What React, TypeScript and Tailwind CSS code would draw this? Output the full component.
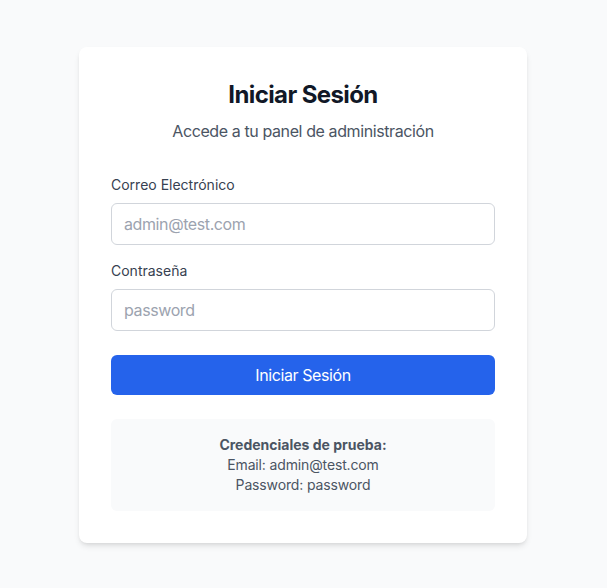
export default function App() {
  return (
    <div className="min-h-screen bg-[#f9fafb] flex items-center justify-center pt-[2px] pr-px" style={{ fontFamily: "Inter, 'Noto Sans', sans-serif" }}>
      <div className="w-[448px] bg-white rounded-lg shadow-md p-8">
        <div className="text-center mb-8">
          <h1 className="text-2xl font-bold text-[#111827] tracking-[-0.025em]">Iniciar Sesión</h1>
          <p className="mt-2 text-base text-[#4b5563] tracking-[-0.025em]">Accede a tu panel de administración</p>
        </div>
        <form className="space-y-4" onSubmit={(e) => e.preventDefault()}>
          <div>
            <label className="block text-sm font-normal text-[#374151] mb-2">Correo Electrónico</label>
            <input
              type="email"
              placeholder="admin@test.com"
              className="block w-full px-3 py-2 text-base tracking-[-0.025em] border border-[#d1d5db] rounded-md placeholder:text-[#9ca3af] text-[#111827] outline-none"
            />
          </div>
          <div>
            <label className="block text-sm font-normal text-[#374151] mb-2">Contraseña</label>
            <input
              type="password"
              placeholder="password"
              className="block w-full px-3 py-2 text-base tracking-[-0.025em] border border-[#d1d5db] rounded-md placeholder:text-[#9ca3af] text-[#111827] outline-none"
            />
          </div>
          <div className="pt-2">
            <button type="submit" className="w-full py-2 text-base tracking-[-0.025em] text-white bg-[#2563eb] rounded-md">
              Iniciar Sesión
            </button>
          </div>
        </form>
        <div className="mt-6 p-4 bg-[#f9fafb] rounded-md text-center text-sm text-[#4b5563]">
          <p className="font-bold">Credenciales de prueba:</p>
          <p className="tracking-[-0.01em]">Email: admin@test.com</p>
          <p className="tracking-[-0.01em]">Password: password</p>
        </div>
      </div>
    </div>
  );
}
